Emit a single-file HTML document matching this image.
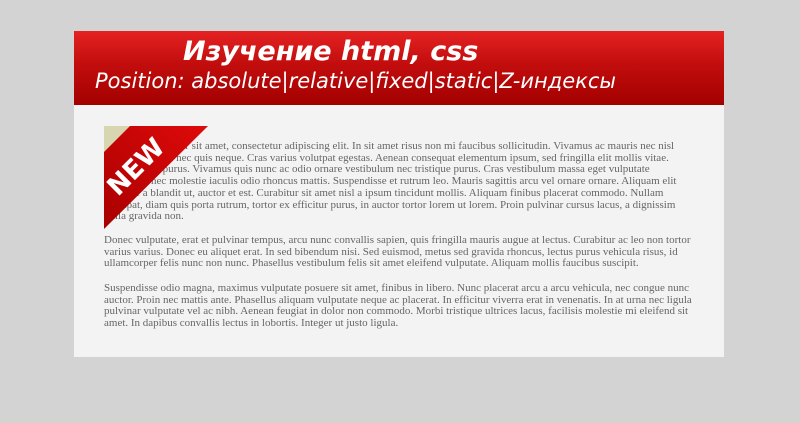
<!DOCTYPE html>
<html><head><meta charset="utf-8"><style>
html,body{margin:0;padding:0;background:#d3d3d3;width:800px;height:423px;overflow:hidden}
#wrap{position:absolute;left:74px;top:31px;width:650px;height:326px;background:#f3f3f3}
#hdr{position:absolute;left:0;top:0;width:650px;height:74px;background:linear-gradient(#e52222,#c20d0d 45%,#a30000)}
#t1{position:absolute;left:109px;top:5px;font:italic bold 27px "DejaVu Sans",sans-serif;color:#fff;white-space:nowrap}
#t2{position:absolute;left:21px;top:38px;font:oblique 21px "DejaVu Sans",sans-serif;color:#fff;white-space:nowrap}
.p{position:absolute;left:30px;font:11px/11.7px "Liberation Serif",serif;color:#666;white-space:nowrap}
svg{position:absolute;left:30px;top:95px}
</style></head><body>
<div id="wrap">
<div id="hdr"><div id="t1">Изучение html, css</div><div id="t2">Position: absolute|relative|fixed|static|Z-индексы</div></div>
<div class="p" style="top:110px">Lorem ipsum dolor sit amet, consectetur adipiscing elit. In sit amet risus non mi faucibus sollicitudin. Vivamus ac mauris nec nisl<br>Sed consectetur nec quis neque. Cras varius volutpat egestas. Aenean consequat elementum ipsum, sed fringilla elit mollis vitae.<br>Nam tempus purus. Vivamus quis nunc ac odio ornare vestibulum nec tristique purus. Cras vestibulum massa eget vulputate<br>cursus. Donec molestie iaculis odio rhoncus mattis. Suspendisse et rutrum leo. Mauris sagittis arcu vel ornare ornare. Aliquam elit<br>tristique a blandit ut, auctor et est. Curabitur sit amet nisl a ipsum tincidunt mollis. Aliquam finibus placerat commodo. Nullam<br>volutpat, diam quis porta rutrum, tortor ex efficitur purus, in auctor tortor lorem ut lorem. Proin pulvinar cursus lacus, a dignissim<br>nulla gravida non.</div>
<div class="p" style="top:204px">Donec vulputate, erat et pulvinar tempus, arcu nunc convallis sapien, quis fringilla mauris augue at lectus. Curabitur ac leo non tortor<br>varius varius. Donec eu aliquet erat. In sed bibendum nisi. Sed euismod, metus sed gravida rhoncus, lectus purus vehicula risus, id<br>ullamcorper felis nunc non nunc. Phasellus vestibulum felis sit amet eleifend vulputate. Aliquam mollis faucibus suscipit.</div>
<div class="p" style="top:252px">Suspendisse odio magna, maximus vulputate posuere sit amet, finibus in libero. Nunc placerat arcu a arcu vehicula, nec congue nunc<br>auctor. Proin nec mattis ante. Phasellus aliquam vulputate neque ac placerat. In efficitur viverra erat in venenatis. In at urna nec ligula<br>pulvinar vulputate vel ac nibh. Aenean feugiat in dolor non commodo. Morbi tristique ultrices lacus, facilisis molestie mi eleifend sit<br>amet. In dapibus convallis lectus in lobortis. Integer ut justo ligula.</div>
<svg width="104" height="104" viewBox="0 0 104 104">
<defs><linearGradient id="g" x1="0" y1="1" x2="1" y2="0"><stop offset="0" stop-color="#a80000"/><stop offset="1" stop-color="#e00a0a"/></linearGradient></defs>
<polygon points="0,0 104,0 0,103" fill="url(#g)"/>
<polygon points="0,0 26,0 0,26" fill="#d8d6b0"/>
<text x="0" y="0" transform="translate(38,47) rotate(-45)" text-anchor="middle" font-family="DejaVu Sans,sans-serif" font-weight="bold" font-size="26" fill="#fff">NEW</text>
</svg>
</div>
</body></html>
